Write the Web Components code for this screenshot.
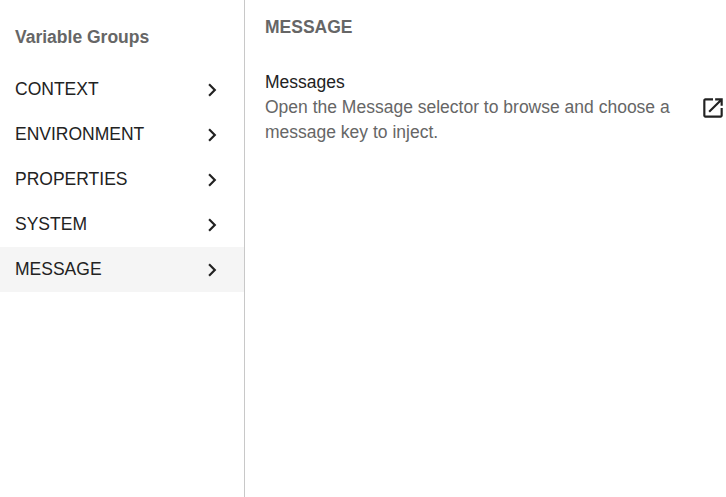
<!DOCTYPE html>
<html>
<head>
<meta charset="utf-8">
<style>
  html, body { margin: 0; height: 100%; }
  body { font-family: "Liberation Sans", Arial, sans-serif; background: #fff; overflow: hidden; }
</style>
</head>
<body>
<variable-panel>
  <group-list slot="groups" heading="Variable Groups">
    <group-item>CONTEXT</group-item>
    <group-item>ENVIRONMENT</group-item>
    <group-item>PROPERTIES</group-item>
    <group-item>SYSTEM</group-item>
    <group-item selected>MESSAGE</group-item>
  </group-list>
  <group-detail slot="detail" heading="MESSAGE">
    <detail-entry name="Messages">Open the Message selector to browse and choose a message key to inject.</detail-entry>
  </group-detail>
</variable-panel>

<script>
(function() {
    class VariablePanel extends HTMLElement {
        constructor() {
            super();
            this.attachShadow({ mode: 'open' });
            this.shadowRoot.innerHTML = `
                <style>
                  :host { display: grid; grid-template-columns: 245px 1fr; height: 497px; }
                  .groups { border-right: 1px solid #c8c8c8; }
                </style>
                <div class="groups"><slot name="groups"></slot></div>
                <div><slot name="detail"></slot></div>
            `;
        }
    }

    class GroupList extends HTMLElement {
        constructor() {
            super();
            this.attachShadow({ mode: 'open' });
            this.shadowRoot.innerHTML = `
                <style>
                  :host { display: block; }
                  h2 {
                    margin: 0;
                    padding: 27px 15px 0;
                    height: 40px;
                    font-size: 17.5px;
                    line-height: 20px;
                    font-weight: 700;
                    color: #666;
                  }
                </style>
                <h2></h2>
                <slot></slot>
            `;
            this.shadowRoot.querySelector('h2').textContent = this.getAttribute('heading');
        }
    }

    class GroupItem extends HTMLElement {
        constructor() {
            super();
            this.attachShadow({ mode: 'open' });
            this.shadowRoot.innerHTML = `
                <style>
                  :host {
                    display: flex;
                    align-items: center;
                    justify-content: space-between;
                    height: 45px;
                    padding: 0 19px 0 15px;
                    font-size: 17.5px;
                    color: #222;
                  }
                  :host([selected]) { background: #f5f5f5; }
                  svg { width: 26px; height: 26px; fill: #222; display: block; }
                </style>
                <slot></slot>
                <svg viewBox="0 0 24 24"><path d="M10 6 8.59 7.41 13.17 12l-4.58 4.59L10 18l6-6z"/></svg>
            `;
        }
    }

    class GroupDetail extends HTMLElement {
        constructor() {
            super();
            this.attachShadow({ mode: 'open' });
            this.shadowRoot.innerHTML = `
                <style>
                  :host { display: block; padding: 17px 0 0 20px; }
                  h3 {
                    margin: 0 0 33px;
                    font-size: 17.5px;
                    line-height: 20px;
                    font-weight: 700;
                    color: #666;
                  }
                </style>
                <h3></h3>
                <slot></slot>
            `;
            this.shadowRoot.querySelector('h3').textContent = this.getAttribute('heading');
        }
    }

    class DetailEntry extends HTMLElement {
        constructor() {
            super();
            this.attachShadow({ mode: 'open' });
            this.shadowRoot.innerHTML = `
                <style>
                  :host { display: flex; align-items: center; justify-content: space-between; }
                  .text { width: 420px; font-size: 17.5px; line-height: 25px; color: #666; }
                  .name { color: #222; }
                  svg { width: 26px; height: 26px; fill: #222; display: block; flex: none; }
                </style>
                <div class="text">
                  <div class="name"></div>
                  <slot></slot>
                </div>
                <svg viewBox="0 0 24 24"><path d="M19 19H5V5h7V3H5c-1.11 0-2 .9-2 2v14c0 1.1.89 2 2 2h14c1.1 0 2-.9 2-2v-7h-2v7zM14 3v2h3.59l-9.83 9.83 1.41 1.41L19 6.41V10h2V3h-7z"/></svg>
            `;
            this.shadowRoot.querySelector('.name').textContent = this.getAttribute('name');
        }
    }

    window.customElements.define('variable-panel', VariablePanel);
    window.customElements.define('group-list', GroupList);
    window.customElements.define('group-item', GroupItem);
    window.customElements.define('group-detail', GroupDetail);
    window.customElements.define('detail-entry', DetailEntry);
})();
</script>
</body>
</html>
